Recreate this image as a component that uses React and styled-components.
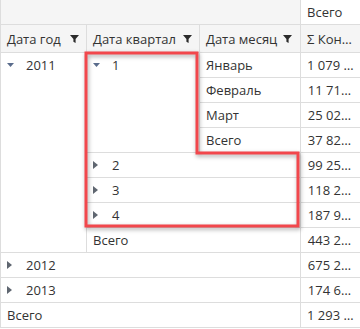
import React from 'react'
import styled, { createGlobalStyle } from 'styled-components'

const Global = createGlobalStyle`
  body {
    margin: 0;
    background: #fff;
    font-family: "Open Sans", "Noto Sans", sans-serif;
    color: #333;
  }
`

const Wrap = styled.div`
  position: relative;
  width: 360px;
  height: 329px;
  overflow: hidden;
`

const Grid = styled.table`
  border-collapse: collapse;
  table-layout: fixed;
  width: 361px;
  font-size: 13px;
  line-height: 16px;
`

const Cell = styled.td`
  height: ${(p) => p.$h || 24}px;
  padding: 0 ${(p) => (p.$right ? 10 : p.$pr || 6)}px 0 ${(p) => p.$pl || 6}px;
  border: 1px solid #ddd;
  border-top: none;
  vertical-align: ${(p) => (p.$top ? 'top' : 'middle')};
  text-align: ${(p) => (p.$right ? 'right' : 'left')};
  white-space: nowrap;
  overflow: hidden;
  background: ${(p) => p.$bg || '#fff'};
  &:first-child {
    border-left: 1px solid #ddd;
  }
`

const Inner = styled.div`
  display: flex;
  align-items: center;
  height: 24px;
`

const HeadInner = styled.div`
  display: flex;
  align-items: center;
  justify-content: space-between;
`

const Toggle = styled.span`
  display: inline-flex;
  width: 19px;
  padding-left: 2px;
  align-items: center;
`

const Filter = () => (
  <svg width="9" height="8" viewBox="0 0 9 8">
    <path d="M0 0H9L5.6 4V8L3.4 6.8V4Z" fill="#2b2b2b" />
  </svg>
)

const Down = () => (
  <svg width="7" height="4" viewBox="0 0 7 4">
    <path d="M0 0H7L3.5 4Z" fill="#5a6c8c" />
  </svg>
)

const Right = () => (
  <svg width="5" height="8" viewBox="0 0 5 8">
    <path d="M0 0L5 4L0 8Z" fill="#5f6670" />
  </svg>
)

const Node = ({ open, children }) => (
  <Inner>
    <Toggle>{open ? <Down /> : <Right />}</Toggle>
    {children}
  </Inner>
)

const Outline = styled.svg`
  position: absolute;
  left: 0;
  top: 0;
  pointer-events: none;
  filter: drop-shadow(1px 2px 2px rgba(0, 0, 0, 0.35));
`

export default function App() {
  return (
    <Wrap>
      <Global />
      <Grid>
        <colgroup>
          <col style={{ width: 86 }} />
          <col style={{ width: 113 }} />
          <col style={{ width: 101 }} />
          <col style={{ width: 61 }} />
        </colgroup>
        <tbody>
          <tr>
            <Cell colSpan={3} $h={24} $bg="#f5f5f5" />
            <Cell $h={24}>Всего</Cell>
          </tr>
          <tr>
            <Cell $h={27} $pr={7} $bg="#f5f5f5">
              <HeadInner>Дата год <Filter /></HeadInner>
            </Cell>
            <Cell $h={27} $pr={7} $bg="#f5f5f5">
              <HeadInner>Дата квартал <Filter /></HeadInner>
            </Cell>
            <Cell $h={27} $pr={8} $bg="#f5f5f5">
              <HeadInner>Дата месяц <Filter /></HeadInner>
            </Cell>
            <Cell $h={27} $bg="#f5f5f5">Σ Кон…</Cell>
          </tr>
          <tr>
            <Cell rowSpan={8} $top $pl={4}>
              <Node open>2011</Node>
            </Cell>
            <Cell rowSpan={4} $top $pl={4}>
              <Node open>1</Node>
            </Cell>
            <Cell>Январь</Cell>
            <Cell $right>1 079 …</Cell>
          </tr>
          <tr>
            <Cell>Февраль</Cell>
            <Cell $right>11 71…</Cell>
          </tr>
          <tr>
            <Cell>Март</Cell>
            <Cell $right>25 02…</Cell>
          </tr>
          <tr>
            <Cell>Всего</Cell>
            <Cell $right>37 82…</Cell>
          </tr>
          <tr>
            <Cell colSpan={2} $pl={4}><Node>2</Node></Cell>
            <Cell $right>99 25…</Cell>
          </tr>
          <tr>
            <Cell colSpan={2} $pl={4}><Node>3</Node></Cell>
            <Cell $right>118 2…</Cell>
          </tr>
          <tr>
            <Cell colSpan={2} $pl={4}><Node>4</Node></Cell>
            <Cell $right>187 9…</Cell>
          </tr>
          <tr>
            <Cell colSpan={2}>Всего</Cell>
            <Cell $right>443 2…</Cell>
          </tr>
          <tr>
            <Cell colSpan={3} $pl={4}><Node>2012</Node></Cell>
            <Cell $right>675 2…</Cell>
          </tr>
          <tr>
            <Cell colSpan={3} $pl={4}><Node>2013</Node></Cell>
            <Cell $right>174 6…</Cell>
          </tr>
          <tr>
            <Cell colSpan={3}>Всего</Cell>
            <Cell $right>1 293 …</Cell>
          </tr>
        </tbody>
      </Grid>
      <Outline width="360" height="329" viewBox="0 0 360 329">
        <polygon
          points="86,53 197,53 197,153 298,153 298,226 86,226"
          fill="none"
          stroke="#f2474c"
          strokeWidth="3"
          strokeLinejoin="miter"
        />
      </Outline>
    </Wrap>
  )
}
